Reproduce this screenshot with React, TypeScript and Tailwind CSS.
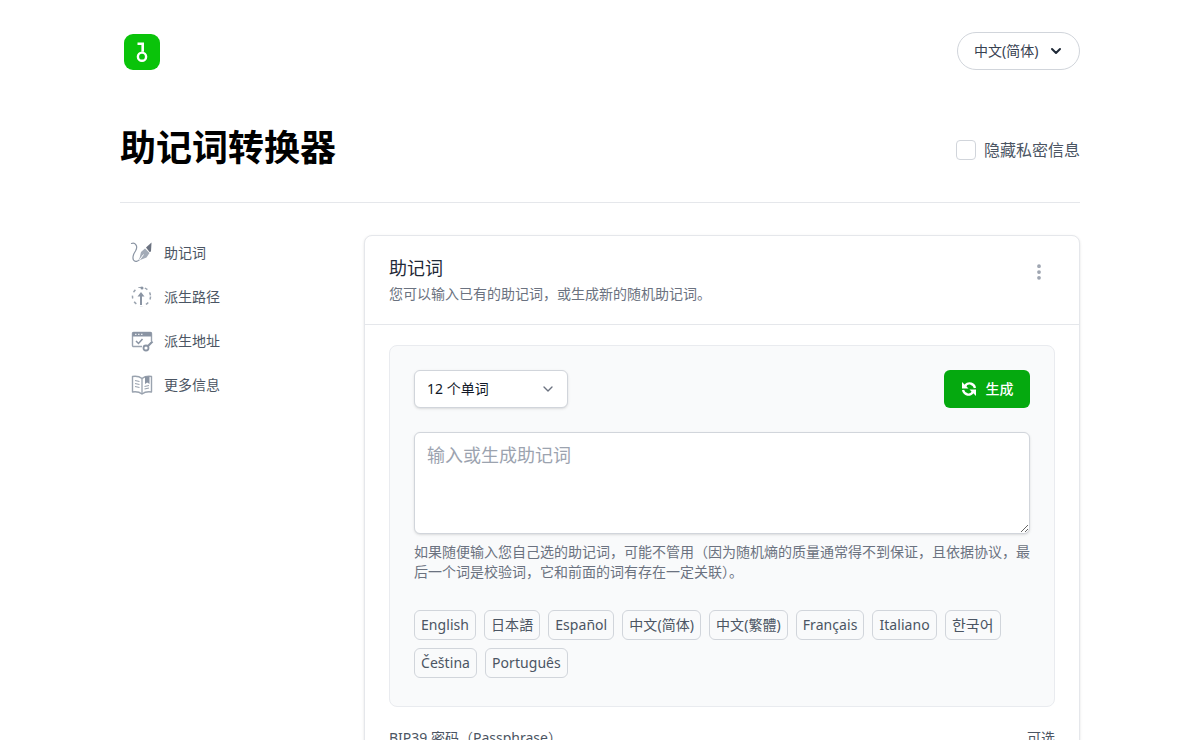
import { ChevronDown, EllipsisVertical } from 'lucide-react'

const languages = ['English', '日本語', 'Español', '中文(简体)', '中文(繁體)', 'Français', 'Italiano', '한국어', 'Čeština', 'Português']

function Logo() {
  return (
    <svg width="36" height="36" viewBox="0 0 36 36">
      <rect width="36" height="36" rx="9" fill="#0ac30a" />
      <path d="M13.500 9.800h5.200v8" fill="none" stroke="#fff" strokeWidth="2.600" />
      <circle cx="18" cy="22.700" r="4.100" fill="none" stroke="#fff" strokeWidth="2.400" />
    </svg>
  )
}

function RefreshIcon() {
  return (
    <svg width="16" height="16" viewBox="0 0 16 16" fill="none">
      <path d="M4 5.500C5 3 7.500 2 9.500 2.500C12 3 13.500 5 14 7" stroke="#fff" strokeWidth="2.300" />
      <path d="M1 1v6.500h6.500z" fill="#fff" />
      <path d="M12 10.500C11 13 8.500 14 6.500 13.500C4 13 2.500 11 2 9" stroke="#fff" strokeWidth="2.300" />
      <path d="M15 15V8.500H8.500z" fill="#fff" />
    </svg>
  )
}

function NavIcon({ name }: { name: string }) {
  if (name === 'mnemonic') {
    return (
      <svg width="24" height="24" viewBox="0 0 24 24" fill="none">
        <path d="M1.500 2.500C5 1 8.500 5 5.500 10C3.500 13 2 16 3.500 19C5 21.500 8 20.500 10 18" stroke="#8a94a3" strokeWidth="1.200" strokeLinecap="round" />
        <path d="M9 19.500L11 11L15 7.500L19.500 12L16.500 16.500z" fill="#a3abb7" />
        <path d="M9.500 19L13.500 13.500" stroke="#fff" strokeWidth="1" />
        <path d="M16 6.500L21.500 1.500L21 10.500L19.500 11z" fill="#6b7280" />
      </svg>
    )
  }
  if (name === 'path') {
    return (
      <svg width="24" height="24" viewBox="0 0 24 24" fill="none">
        <circle cx="11.500" cy="11.500" r="9" stroke="#9aa3af" strokeWidth="1.500" strokeDasharray="3 3.500" />
        <path d="M11 3v18" stroke="#fff" strokeWidth="6" />
        <circle cx="12" cy="3" r="1.500" fill="#8a94a3" />
        <path d="M11 10v10" stroke="#8a94a3" strokeWidth="2" />
        <path d="M7.500 11.500L11 7L14.500 11.500z" fill="#8a94a3" />
      </svg>
    )
  }
  if (name === 'address') {
    return (
      <svg width="24" height="24" viewBox="0 0 24 24" fill="none">
        <path d="M12 17.500H3.500A1 1 0 0 1 2.500 16.500V4.500A1 1 0 0 1 3.500 3.500H20.500A1 1 0 0 1 21.500 4.500V12" stroke="#9aa3af" strokeWidth="1.400" />
        <path d="M2.500 4A1 1 0 0 1 3.500 3H20.500A1 1 0 0 1 21.500 4V7.500H2.500z" fill="#8a94a3" />
        <path d="M5 5.300h1.500M8 5.300h1.500M11 5.300h1.500" stroke="#fff" strokeWidth="1" />
        <path d="M6 12l2.500 2.500 4-4.500" stroke="#8a94a3" strokeWidth="1.500" />
        <circle cx="16" cy="19" r="2.500" stroke="#8a94a3" strokeWidth="1.800" />
        <path d="M18 17l4.500-4.500" stroke="#8a94a3" strokeWidth="2.200" />
      </svg>
    )
  }
  return (
    <svg width="24" height="24" viewBox="0 0 24 24" fill="none">
      <path d="M12 5.500C9.500 3.500 6 3 2.500 3.500V19C6 18.500 9.500 19 12 21C14.500 19 18 18.500 21.500 19V3.500C18 3 14.500 3.500 12 5.500z" stroke="#9aa3af" strokeWidth="1.400" strokeLinejoin="round" />
      <path d="M12 5.500V21" stroke="#9aa3af" strokeWidth="1.300" />
      <path d="M5 7.500L9.500 8.500M5 10.500L9.500 11.500M5 13.500L9.500 14.500M14.500 13.500L19 12.500M14.500 16L19 15" stroke="#9aa3af" strokeWidth="1.200" />
      <path d="M15 3.500H19.500V11L17.250 9.500L15 11z" fill="#8a94a3" />
    </svg>
  )
}

const navItems = [
  { icon: 'mnemonic', label: '助记词' },
  { icon: 'path', label: '派生路径' },
  { icon: 'address', label: '派生地址' },
  { icon: 'more', label: '更多信息' },
]

export default function App() {
  return (
    <div className="h-[740px] overflow-hidden bg-white font-['Noto_Sans','Noto_Sans_CJK_SC',sans-serif] text-[#1f2937]">
      <div className="mx-auto w-[960px]">
        <header className="flex h-[102px] items-start justify-between pt-8">
          <div className="ml-1 mt-0.5">
            <Logo />
          </div>
          <button className="flex h-[38px] w-[123px] items-center justify-between rounded-full border border-[#d1d5db] pl-4 pr-[15px] text-sm text-[#374151]">
            <span>中文(简体)</span>
            <ChevronDown size={16} strokeWidth={3} className="text-[#1f2937]" />
          </button>
        </header>

        <div className="flex h-[101px] items-center justify-between border-b border-[#e5e7eb] pb-[9px]">
          <h1 className="text-[36px] leading-[46px] font-bold text-black">助记词转换器</h1>
          <label className="mt-[5px] flex items-center gap-2 text-base text-[#4b5563]">
            <span className="h-5 w-5 rounded-[4px] border border-[#d1d5db] bg-white" />
            隐藏私密信息
          </label>
        </div>

        <div className="mt-[32px] flex">
          <nav className="flex w-[244px] shrink-0 flex-col gap-5 pl-[10px] pt-[6px]">
            {navItems.map(item => (
              <a key={item.label} className="flex h-6 items-center gap-[10px] text-sm text-[#4b5563]">
                <NavIcon name={item.icon} />
                {item.label}
              </a>
            ))}
          </nav>

          <section className="w-[716px] rounded-lg border border-[#e5e7eb] bg-white shadow-sm">
            <div className="flex h-[89px] items-start justify-between border-b border-[#e5e7eb] pl-6 pr-[30px] pt-[20px]">
              <div>
                <h2 className="text-lg leading-6 font-normal text-[#1f2937]">助记词</h2>
                <p className="mt-[4px] text-sm leading-5 text-[#6b7280]">您可以输入已有的助记词，或生成新的随机助记词。</p>
              </div>
              <EllipsisVertical size={20} strokeWidth={2.500} className="mt-[6px] text-[#9ca3af]" />
            </div>

            <div className="px-6 pt-5">
              <div className="h-[362px] rounded-lg border border-[#e9ebef] bg-[#f9fafb] px-6 pt-6">
                <div className="flex items-center justify-between">
                  <button className="flex h-[38px] w-[154px] items-center justify-between rounded-md border border-[#d1d5db] bg-white pl-3 pr-[11px] text-sm text-[#111827] shadow-sm">
                    <span>12 个单词</span>
                    <ChevronDown size={16} className="text-[#6b7280]" />
                  </button>
                  <button className="flex h-[38px] w-[86px] items-center justify-center gap-[9px] rounded-md bg-[#05a90f] text-sm font-medium text-white">
                    <RefreshIcon />
                    生成
                  </button>
                </div>

                <textarea
                  placeholder="输入或生成助记词"
                  className="mt-6 block h-[102px] w-full rounded-md border border-[#d1d5db] bg-white px-3 py-2 text-lg leading-7 shadow-sm placeholder:text-[#9ca3af]"
                />
                <p className="mt-2 text-sm leading-5 text-[#6b7280]">
                  如果随便输入您自己选的助记词，可能不管用（因为随机熵的质量通常得不到保证，且依据协议，最后一个词是校验词，它和前面的词有存在一定关联）。
                </p>

                <div className="mt-[28px] flex flex-wrap gap-x-2 gap-y-2">
                  {languages.map(lang => (
                    <span
                      key={lang}
                      className={
                        lang === '한국어'
                          ? "flex h-[30px] w-[56px] items-center justify-center rounded-md border border-[#d1d5db] bg-[#f9fafb] font-['Noto_Sans_CJK_KR',sans-serif] text-[15px] text-[#4b5563]"
                          : "flex h-[30px] items-center rounded-md border border-[#d1d5db] bg-[#f9fafb] px-[6px] text-sm tracking-[0.004em] text-[#4b5563]"
                      }
                    >
                      {lang}
                    </span>
                  ))}
                </div>
              </div>

              <div className="mt-[21px] flex items-center justify-between text-sm leading-5 text-[#4b5563]">
                <span>BIP39 密码（Passphrase）</span>
                <span>可选</span>
              </div>
            </div>
          </section>
        </div>
      </div>
    </div>
  )
}
